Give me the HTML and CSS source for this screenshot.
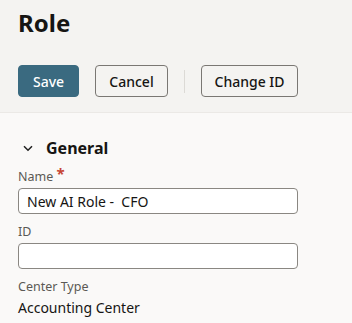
FILE: index.html
```html
<!DOCTYPE html>
<html>
<head>
    <title>Role</title>
    <link rel="stylesheet" href="styles.css">
</head>
<body>
    <div class="page-header">
        <h1 class="title">Role</h1>
        <div class="toolbar">
            <button class="btn btn-primary">Save</button>
            <button class="btn">Cancel</button>
            <span class="separator"></span>
            <button class="btn btn-wide">Change ID</button>
        </div>
    </div>

    <div class="section">
        <div class="section-head">
            <svg class="chevron" width="10" height="7" viewBox="0 0 10 7">
                <path d="M1 1.2 L5 5.2 L9 1.2" fill="none" stroke="#1f1f1f" stroke-width="1.5"/>
            </svg>
            <span class="section-title">General</span>
        </div>

        <div class="field">
            <label class="label">Name <span class="required">*</span></label>
            <input type="text" class="input" value="New AI Role -  CFO">
        </div>

        <div class="field">
            <label class="label">ID</label>
            <input type="text" class="input" value="">
        </div>

        <div class="field">
            <label class="label">Center Type</label>
            <div class="value">Accounting Center</div>
        </div>
    </div>
</body>
</html>
```

FILE: styles.css
```css
* {
    box-sizing: border-box;
}

body {
    margin: 0;
    background-color: #faf9f8;
    font-family: "Noto Sans", "Open Sans", sans-serif;
    color: #161513;
}

.page-header {
    background-color: #f4f3f1;
    padding: 6px 18px 15px;
    border-bottom: 1px solid #ebe9e6;
}

.title {
    margin: 0;
    font-size: 24px;
    font-weight: 700;
    line-height: 34px;
}

.toolbar {
    display: flex;
    align-items: center;
    gap: 16px;
    margin-top: 25px;
}

.btn {
    height: 32px;
    width: 73px;
    padding: 0;
    font-family: inherit;
    font-size: 14px;
    font-weight: 500;
    color: #161513;
    background-color: transparent;
    border: 1px solid #7a7773;
    border-radius: 4px;
}

.btn-primary {
    width: 61px;
    color: #fff;
    background-color: #3a6a80;
    border-color: #3a6a80;
}

.btn-wide {
    width: 97px;
}

.separator {
    width: 1px;
    height: 23px;
    background-color: #dcdad6;
}

.section {
    padding: 22px 18px 0;
}

.section-head {
    display: flex;
    align-items: center;
    height: 26px;
    margin-bottom: 7px;
}

.chevron {
    margin-left: 5px;
    margin-right: 13px;
}

.section-title {
    font-size: 16px;
    font-weight: 700;
}

.field {
    margin-bottom: 9px;
}

.label {
    display: block;
    font-size: 12.5px;
    color: #5b5955;
    line-height: 18px;
    margin-bottom: 2px;
}

.required {
    color: #c74634;
    font-weight: 700;
    font-size: 15px;
    line-height: 10px;
    vertical-align: top;
}

.input {
    display: block;
    width: 280px;
    height: 26px;
    padding: 0 8px;
    font-family: inherit;
    font-size: 14px;
    color: #161513;
    background-color: #fff;
    border: 1px solid #8a8782;
    border-radius: 4px;
}

.value {
    font-size: 14px;
    line-height: 20px;
}
```
